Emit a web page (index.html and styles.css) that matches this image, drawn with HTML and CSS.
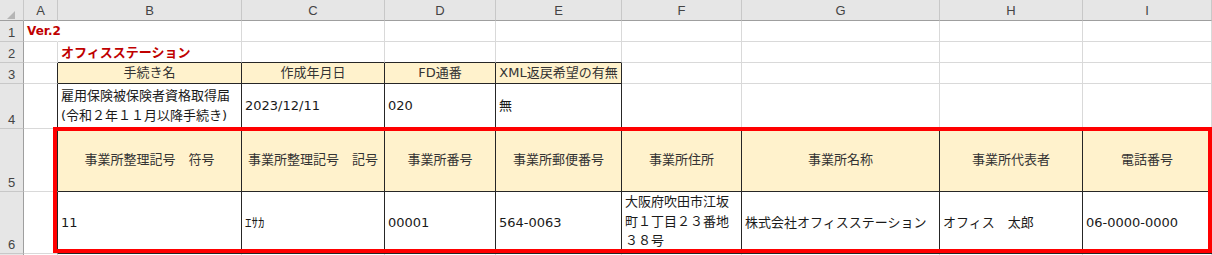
FILE: index.html
```html
<!DOCTYPE html>
<html lang="ja">
    <head>
        <meta charset="UTF-8" />
        <meta name="viewport" content="width=device-width, initial-scale=1.0" />
        <title>オフィスステーション 事業所情報</title>
        <link rel="stylesheet" href="styles.css">
    </head>
    <body>
        <div class="sheet">
            <table class="grid">
                <colgroup>
                    <col class="w-hd">
                    <col class="w-a">
                    <col class="w-b">
                    <col class="w-c">
                    <col class="w-d">
                    <col class="w-e">
                    <col class="w-f">
                    <col class="w-g">
                    <col class="w-h">
                    <col class="w-i">
                </colgroup>
                <thead>
                    <tr class="r-col">
                        <th class="corner"><span class="tri"></span></th>
                        <th>A</th>
                        <th>B</th>
                        <th>C</th>
                        <th>D</th>
                        <th>E</th>
                        <th>F</th>
                        <th>G</th>
                        <th>H</th>
                        <th>I</th>
                    </tr>
                </thead>
                <tbody>
                    <tr class="r-1">
                        <th>1</th>
                        <td class="ver spill">Ver.2</td>
                        <td></td><td></td><td></td><td></td><td></td><td></td><td></td><td></td>
                    </tr>
                    <tr class="r-2">
                        <th>2</th>
                        <td></td>
                        <td class="title top">オフィスステーション</td>
                        <td class="top"></td>
                        <td class="top"></td>
                        <td class="top"></td>
                        <td></td><td></td><td></td><td></td>
                    </tr>
                    <tr class="r-3">
                        <th>3</th>
                        <td class="edge"></td>
                        <td class="bx hd">手続き名</td>
                        <td class="bx hd">作成年月日</td>
                        <td class="bx hd">FD通番</td>
                        <td class="bx hd">XML返戻希望の有無</td>
                        <td></td><td></td><td></td><td></td>
                    </tr>
                    <tr class="r-4">
                        <th>4</th>
                        <td class="edge"></td>
                        <td class="bx">雇用保険被保険者資格取得届<br>(令和２年１１月以降手続き)</td>
                        <td class="bx">2023/12/11</td>
                        <td class="bx">020</td>
                        <td class="bx">無</td>
                        <td class="top"></td>
                        <td class="top"></td>
                        <td class="top"></td>
                        <td class="top"></td>
                    </tr>
                    <tr class="r-5">
                        <th>5</th>
                        <td class="edge"></td>
                        <td class="bx hd">事業所整理記号　符号</td>
                        <td class="bx hd">事業所整理記号　記号</td>
                        <td class="bx hd">事業所番号</td>
                        <td class="bx hd">事業所郵便番号</td>
                        <td class="bx hd">事業所住所</td>
                        <td class="bx hd">事業所名称</td>
                        <td class="bx hd">事業所代表者</td>
                        <td class="bx hd">電話番号</td>
                    </tr>
                    <tr class="r-6">
                        <th>6</th>
                        <td class="edge"></td>
                        <td class="bx">11</td>
                        <td class="bx">ｴｻｶ</td>
                        <td class="bx">00001</td>
                        <td class="bx">564-0063</td>
                        <td class="bx wrap">大阪府吹田市江坂<br>町１丁目２３番地<br>３８号</td>
                        <td class="bx">株式会社オフィスステーション</td>
                        <td class="bx">オフィス　太郎</td>
                        <td class="bx">06-0000-0000</td>
                    </tr>
                    <tr class="r-7">
                        <th></th>
                        <td></td><td></td><td></td><td></td><td></td><td></td><td></td><td></td><td></td>
                    </tr>
                </tbody>
            </table>
            <!-- 赤枠で事業所情報を囲む -->
            <div class="mark"></div>
        </div>
    </body>
</html>
```

FILE: styles.css
```css
* {
    margin: 0;
    padding: 0;
    box-sizing: border-box;
}
body {
    background: #fff;
    overflow: hidden;
    font-family: "DejaVu Sans", "Noto Sans CJK JP", sans-serif;
    font-size: 13px;
    color: #1a1a1a;
}
.sheet {
    position: relative;
    width: 1212px;
    height: 255px;
    overflow: hidden;
}
.grid {
    border-collapse: separate;
    border-spacing: 0;
    table-layout: fixed;
    width: 1212px;
}

/* 列幅 */
.w-hd { width: 24px; }
.w-a { width: 34px; }
.w-b { width: 184px; }
.w-c { width: 143px; }
.w-d { width: 111px; }
.w-e { width: 126px; }
.w-f { width: 120px; }
.w-g { width: 198px; }
.w-h { width: 143px; }
.w-i { width: 129px; }

/* 行の高さ */
.r-col { height: 21px; }
.r-1 { height: 20px; }
.r-2 { height: 20px; }
.r-3 { height: 21px; }
.r-4 { height: 45px; }
.r-5 { height: 63px; }
.r-6 { height: 62px; }
.r-7 { height: 20px; }

.grid th {
    background: #e6e6e6;
    font-family: "Liberation Sans", sans-serif;
    font-weight: normal;
    font-size: 13px;
    color: #444;
    text-align: center;
    vertical-align: bottom;
}
thead th {
    border-right: 1px solid #c8c8c8;
    border-bottom: 1px solid #9f9f9f;
    line-height: 18px;
}
tbody th {
    border-right: 1px solid #9f9f9f;
    border-bottom: 1px solid #c8c8c8;
    line-height: 17px;
}
.corner {
    text-align: right;
    padding: 0 1px 1px 0;
    line-height: 0;
}
.tri {
    display: inline-block;
    width: 0;
    height: 0;
    border-left: 8px solid transparent;
    border-bottom: 8px solid #b5b5b5;
}

.grid td {
    border-right: 1px solid #d9d9d9;
    border-bottom: 1px solid #d9d9d9;
    padding: 0 3px;
    line-height: 20px;
    white-space: nowrap;
    vertical-align: middle;
}
/* 罫線 */
.grid td.bx {
    border-right-color: #262626;
    border-bottom-color: #262626;
}
.grid td.edge {
    border-right-color: #262626;
}
.grid td.top {
    border-bottom-color: #262626;
}
.grid td.spill {
    border-right-color: transparent;
}
.grid td.wrap {
    line-height: 19.5px;
    padding-bottom: 2px;
}
.hd {
    background: #fff2cc;
    text-align: center;
    color: #333;
}
.ver {
    color: #c00000;
    font-weight: bold;
    font-size: 12px;
}
.title {
    color: #c00000;
    font-weight: bold;
    font-family: "Noto Sans CJK JP", sans-serif;
}

.mark {
    position: absolute;
    left: 53px;
    top: 127px;
    width: 1159px;
    height: 126px;
    border: 4px solid #f00;
}
```
